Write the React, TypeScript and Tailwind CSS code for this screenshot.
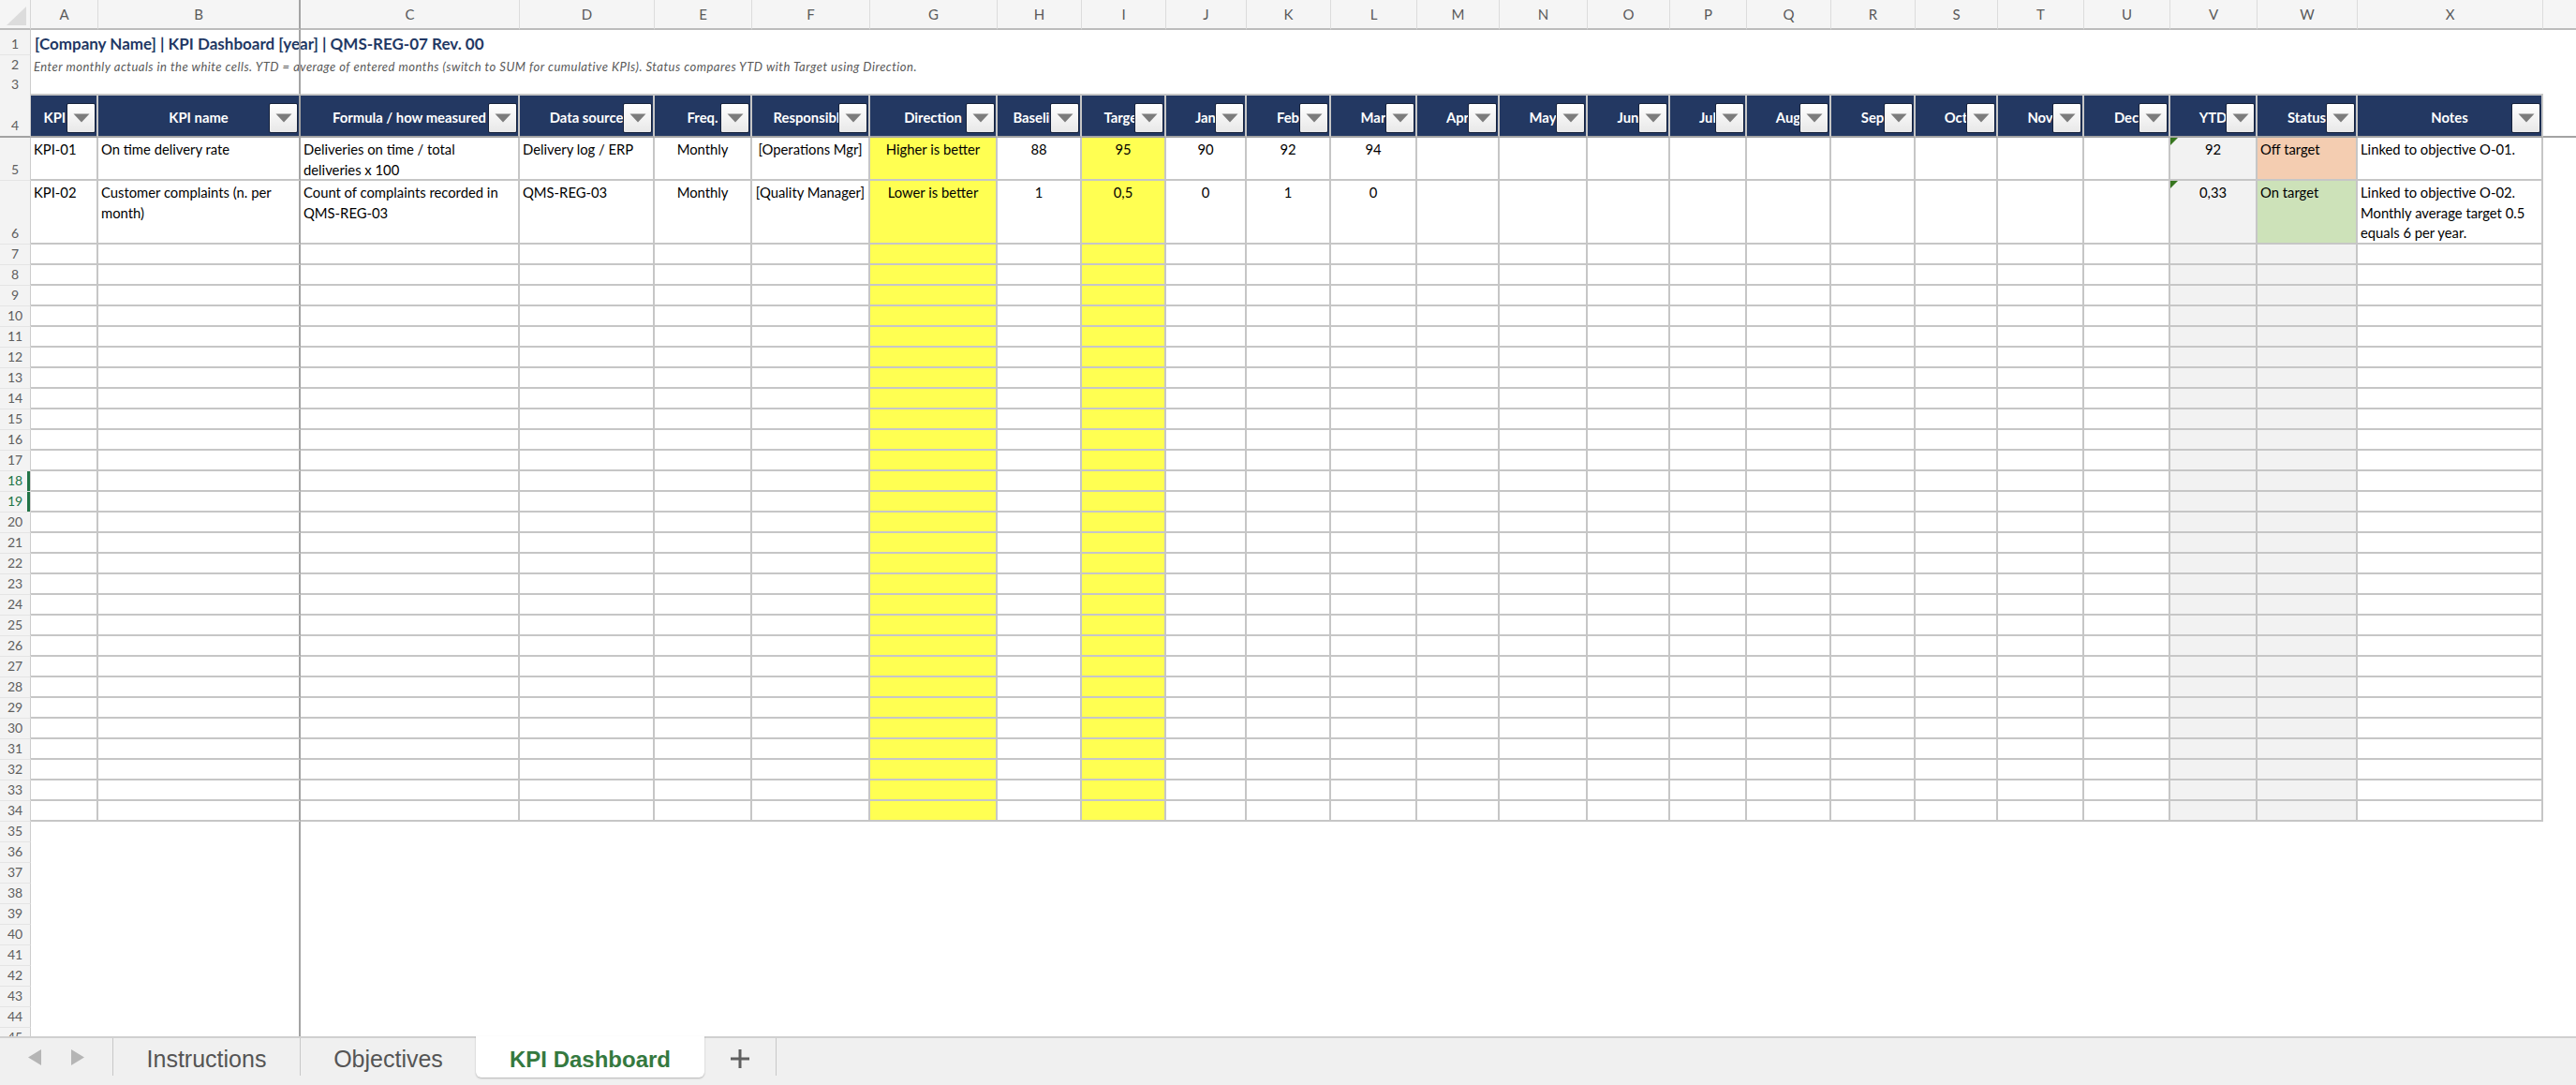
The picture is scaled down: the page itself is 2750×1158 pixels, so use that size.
import React from "react";
import clsx from "clsx";

const GRID =
  "grid grid-cols-[33px_72px_216px_234px_144px_104px_126px_136px_90px_90px_86px_90px_92px_88px_94px_88px_82px_90px_90px_88px_92px_92px_93px_107px_198px_1fr]";

const LETTERS = "ABCDEFGHIJKLMNOPQRSTUVWX".split("");

const HEADERS = [
  "KPI ID",
  "KPI name",
  "Formula / how measured",
  "Data source",
  "Freq.",
  "Responsible",
  "Direction",
  "Baseline",
  "Target",
  "Jan",
  "Feb",
  "Mar",
  "Apr",
  "May",
  "Jun",
  "Jul",
  "Aug",
  "Sep",
  "Oct",
  "Nov",
  "Dec",
  "YTD",
  "Status",
  "Notes",
];

const LEFT = new Set([0, 1, 2, 3, 22, 23]);

type Cell = string | string[];

const DATA: { n: number; h: string; cells: Cell[] }[] = [
  {
    n: 5,
    h: "h-[46px]",
    cells: [
      "KPI-01",
      "On time delivery rate",
      ["Deliveries on time / total", "deliveries x 100"],
      "Delivery log / ERP",
      "Monthly",
      "[Operations Mgr]",
      "Higher is better",
      "88",
      "95",
      "90",
      "92",
      "94",
      "", "", "", "", "", "", "", "", "",
      "92",
      "Off target",
      "Linked to objective O-01.",
    ],
  },
  {
    n: 6,
    h: "h-[68px]",
    cells: [
      "KPI-02",
      ["Customer complaints (n. per", "month)"],
      ["Count of complaints recorded in", "QMS-REG-03"],
      "QMS-REG-03",
      "Monthly",
      "[Quality Manager]",
      "Lower is better",
      "1",
      "0,5",
      "0",
      "1",
      "0",
      "", "", "", "", "", "", "", "", "",
      "0,33",
      "On target",
      ["Linked to objective O-02.", "Monthly average target 0.5", "equals 6 per year."],
    ],
  },
];

function fillFor(col: number, row: number) {
  if (col === 6 || col === 8) return "bg-[#ffff52]";
  if (col === 21) return "bg-[#f2f2f2]";
  if (col === 22) {
    if (row === 5) return "bg-[#f4cdb1]";
    if (row === 6) return "bg-[#cde2b9]";
    return "bg-[#f2f2f2]";
  }
  return "bg-white";
}

function RowNum({ n, freeze }: { n: number; freeze?: boolean }) {
  const sel = n === 18 || n === 19;
  return (
    <div
      className={clsx(
        "flex items-end justify-center border-r border-r-[#cdcdcd] bg-[#f3f3f3] pb-[1px] text-[14px] leading-[20px]",
        sel ? "text-[#217346] shadow-[inset_-3px_0_0_#217346]" : "text-[#5e5e5e]",
        freeze ? "border-b-2 border-b-[#a3a3a3]" : "border-b border-b-[#e4e4e4]"
      )}
    >
      {n}
    </div>
  );
}

function FilterBtn() {
  return (
    <div className="absolute right-[1px] bottom-[3px] flex h-[32px] w-[31px] items-center justify-center rounded-[2px] border border-[#16223b] bg-linear-to-b from-white to-[#e8e8e8]">
      <svg width="18" height="10" viewBox="0 0 18 10">
        <path d="M0.5 0.5h17L9 9.5z" fill="#7c7c7c" />
      </svg>
    </div>
  );
}

function DataCell({ col, row, value }: { col: number; row: number; value?: Cell }) {
  const lines = !value ? [] : Array.isArray(value) ? value : [value];
  return (
    <div
      className={clsx(
        "relative min-w-0 overflow-hidden whitespace-nowrap border-b-2 border-r-2 border-b-[#c6c6c6] px-[3px] pt-[2px] text-[14.8px] leading-[21.5px] text-black",
        col === 1 ? "border-r-[#a3a3a3]" : "border-r-[#c6c6c6]",
        LEFT.has(col) ? "text-left" : "text-center",
        fillFor(col, row)
      )}
    >
      {col === 21 && lines.length > 0 ? (
        <svg className="absolute left-0 top-0" width="8" height="8" viewBox="0 0 8 8">
          <path d="M0 0h8L0 8z" fill="#37761f" />
        </svg>
      ) : null}
      {lines.map((l, i) => (
        <div key={i}>{l}</div>
      ))}
    </div>
  );
}

function PlainRow({ n, h }: { n: number; h: string }) {
  return (
    <div className={`${GRID} ${h}`}>
      <RowNum n={n} />
      <div />
      <div className="border-r-2 border-r-[#a3a3a3]" />
    </div>
  );
}

export default function App() {
  const empty = Array.from({ length: 28 }, (_, i) => i + 7);
  const tail = Array.from({ length: 11 }, (_, i) => i + 35);
  return (
    <div className="flex h-[1158px] w-full flex-col overflow-hidden bg-white font-['Lato','Noto_Sans',sans-serif]">
      <div className="min-h-0 flex-1 overflow-hidden">
        {/* column letters */}
        <div className={`${GRID} h-[32px]`}>
          <div className="flex items-end justify-end border-b-2 border-r border-b-[#bcbcbc] border-r-[#d6d6d6] bg-[#f5f5f5] pb-[3px] pr-[4px]">
            <svg width="21" height="20" viewBox="0 0 21 20">
              <path d="M21 0v20H0z" fill="#dcdcdc" />
            </svg>
          </div>
          {LETTERS.map((l, i) => (
            <div
              key={l}
              className={clsx(
                "flex items-center justify-center border-b-2 border-b-[#bcbcbc] bg-[#f5f5f5] text-[15px] text-[#5a5a5a]",
                i === 1 ? "border-r-2 border-r-[#a3a3a3]" : "border-r border-r-[#dcdcdc]"
              )}
            >
              {l}
            </div>
          ))}
          <div className="border-b-2 border-b-[#bcbcbc] bg-[#f5f5f5]" />
        </div>

        {/* row 1 title */}
        <div className={`${GRID} h-[27px]`}>
          <RowNum n={1} />
          <div className="flex min-w-0 items-end whitespace-nowrap pb-[1px] pl-[4px] text-[17px] font-bold leading-[22px] text-[#1f3864]">
            [Company Name] | KPI Dashboard [year] | QMS-REG-07 Rev. 00
          </div>
          <div className="border-r-2 border-r-[#a3a3a3]" />
        </div>

        {/* row 2 note */}
        <div className={`${GRID} h-[21px]`}>
          <RowNum n={2} />
          <div className="flex min-w-0 items-end whitespace-nowrap pl-[3px] text-[13px] italic leading-[20px] tracking-[0.5px] text-[#595959]">
            Enter monthly actuals in the white cells. YTD = average of entered months (switch to SUM for cumulative KPIs). Status compares YTD with Target using Direction.
          </div>
          <div className="border-r-2 border-r-[#a3a3a3]" />
        </div>

        <PlainRow n={3} h="h-[20px]" />

        {/* row 4 header */}
        <div className={`${GRID} h-[47px]`}>
          <RowNum n={4} freeze />
          {HEADERS.map((t, i) => (
            <div
              key={t}
              className={clsx(
                "relative flex min-w-0 items-center justify-center overflow-hidden whitespace-nowrap border-t-2 border-b-2 border-r-2 border-t-[#c6c6c6] border-b-[#a3a3a3] bg-[#233862] pt-[3px] text-[14.8px] font-bold text-white",
                i === 1 ? "border-r-[#a3a3a3]" : "border-r-[#c6c6c6]"
              )}
            >
              {t}
              <FilterBtn />
            </div>
          ))}
          <div className="border-b-2 border-b-[#a3a3a3]" />
        </div>

        {DATA.map((r) => (
          <div key={r.n} className={`${GRID} ${r.h}`}>
            <RowNum n={r.n} />
            {r.cells.map((c, i) => (
              <DataCell key={i} col={i} row={r.n} value={c} />
            ))}
          </div>
        ))}

        {empty.map((n) => (
          <div key={n} className={`${GRID} h-[22px]`}>
            <RowNum n={n} />
            {LETTERS.map((_, i) => (
              <DataCell key={i} col={i} row={n} />
            ))}
          </div>
        ))}

        {tail.map((n) => (
          <PlainRow key={n} n={n} h="h-[22px]" />
        ))}
      </div>

      {/* sheet tabs */}
      <div className="flex h-[52px] shrink-0 items-start border-t-2 border-t-[#d0d0d0] bg-[#f0f0f0] font-['Liberation_Sans',sans-serif]">
        <div className="flex h-[40px] w-[121px] items-center border-r border-r-[#c8c8c8] pl-[30px]">
          <svg width="14" height="17" viewBox="0 0 14 17">
            <path d="M14 0v17L0 8.5z" fill="#b5b5b5" />
          </svg>
          <svg className="ml-[32px]" width="14" height="17" viewBox="0 0 14 17">
            <path d="M0 0v17l14-8.5z" fill="#b5b5b5" />
          </svg>
        </div>
        <div className="flex h-[40px] w-[200px] items-center justify-center border-r border-r-[#c8c8c8] pt-[6px] text-[25px] text-[#555555]">
          Instructions
        </div>
        <div className="flex h-[40px] w-[187px] items-center justify-center pt-[6px] text-[25px] text-[#555555]">
          Objectives
        </div>
        <div className="-mt-[2px] flex h-[44px] w-[244px] items-center justify-center rounded-b-[6px] bg-white pt-[6px] text-[24px] font-bold text-[#35793f] shadow-[0_1px_2px_rgba(0,0,0,0.25)]">
          KPI Dashboard
        </div>
        <div className="flex h-[40px] w-[77px] items-center justify-center border-r border-r-[#c8c8c8] pt-[4px]">
          <svg width="22" height="22" viewBox="0 0 22 22">
            <path d="M11 1v20M1 11h20" stroke="#5f5f5f" strokeWidth="3" />
          </svg>
        </div>
      </div>
    </div>
  );
}
